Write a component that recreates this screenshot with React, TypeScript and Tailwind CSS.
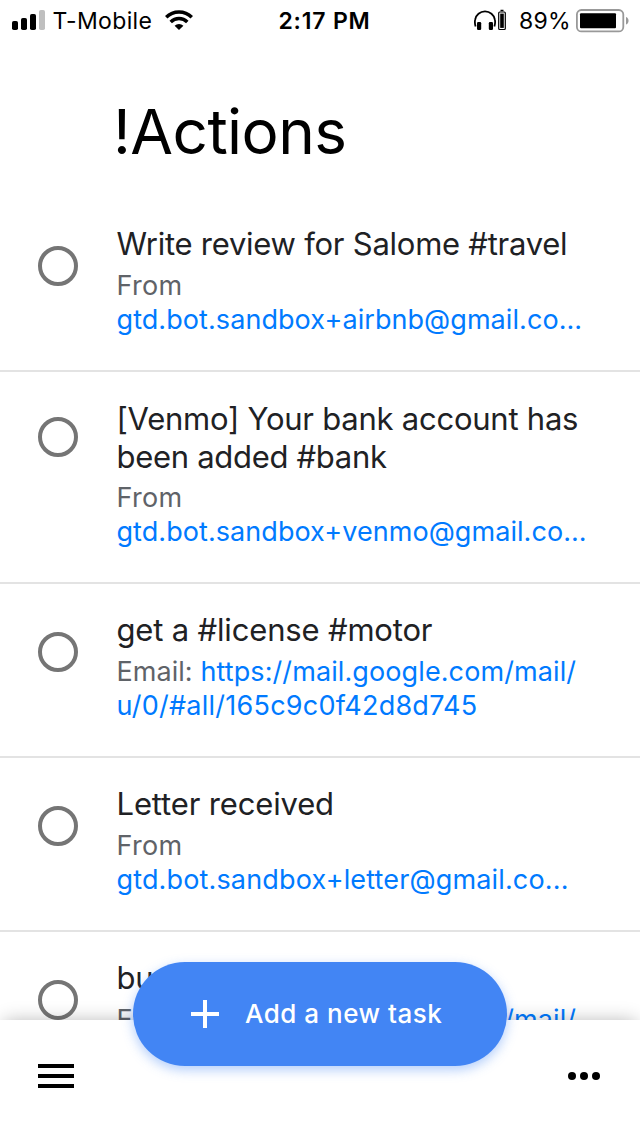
type Line = { text: string; tracking: string };
type Task = {
  title: Line[];
  prefix: Line;
  inlineLink?: Line;
  link: Line;
  circleTop: string;
};

const tasks: Task[] = [
  {
    title: [{ text: "Write review for Salome #travel", tracking: "tracking-[-0.25px]" }],
    prefix: { text: "From", tracking: "tracking-[0.3px]" },
    link: { text: "gtd.bot.sandbox+airbnb@gmail.co...", tracking: "tracking-[0.07px]" },
    circleTop: "pt-[48px]",
  },
  {
    title: [
      { text: "[Venmo] Your bank account has", tracking: "tracking-[-0.24px]" },
      { text: "been added #bank", tracking: "tracking-[-0.3px]" },
    ],
    prefix: { text: "From", tracking: "tracking-[0.3px]" },
    link: { text: "gtd.bot.sandbox+venmo@gmail.co...", tracking: "tracking-[0.06px]" },
    circleTop: "pt-[45px]",
  },
  {
    title: [{ text: "get a #license #motor", tracking: "tracking-[-0.17px]" }],
    prefix: { text: "Email:", tracking: "tracking-[0.05px]" },
    inlineLink: { text: "https://mail.google.com/mail/", tracking: "tracking-[0.1px]" },
    link: { text: "u/0/#all/165c9c0f42d8d745", tracking: "tracking-[0.24px]" },
    circleTop: "pt-[48px]",
  },
  {
    title: [{ text: "Letter received", tracking: "tracking-[-0.15px]" }],
    prefix: { text: "From", tracking: "tracking-[0.3px]" },
    link: { text: "gtd.bot.sandbox+letter@gmail.co...", tracking: "tracking-[0.15px]" },
    circleTop: "pt-[48px]",
  },
  {
    title: [{ text: "buy", tracking: "tracking-[-0.12px]" }],
    prefix: { text: "Email:", tracking: "tracking-[0.05px]" },
    inlineLink: { text: "https://mail.google.com/mail/", tracking: "tracking-[0.1px]" },
    link: { text: "", tracking: "" },
    circleTop: "pt-[48px]",
  },
];

function StatusBar() {
  return (
    <header className="grid h-10 shrink-0 grid-cols-[1fr_auto_1fr] items-center pr-[11px] pl-3 text-[23px] leading-[38px] text-black">
      <div className="flex items-center">
        <svg width="33" height="20" viewBox="0 0 33 20">
          <rect x="0" y="11" width="6" height="9" rx="1.8" />
          <rect x="9" y="8" width="6" height="12" rx="1.8" />
          <rect x="18" y="4" width="6" height="16" rx="1.8" />
          <rect x="27" y="0" width="6" height="20" rx="1.8" fill="#bfbfbf" />
        </svg>
        <span className="ml-[7.5px] pt-[2px] tracking-[0.35px]">T-Mobile</span>
        <svg className="ml-[13px]" width="28" height="20" viewBox="0 0 28 20" fill="none" stroke="#000">
          <path d="M1.2 7.3a18.2 18.2 0 0 1 25.6 0" strokeWidth="3.6" />
          <path d="M5.7 12a11.8 11.8 0 0 1 16.6 0" strokeWidth="3.5" />
          <path d="M9.6 15.8a6.2 6.2 0 0 1 8.8 0L14 20z" fill="#000" stroke="none" />
        </svg>
      </div>
      <div className="pt-[2px] pl-[8px] font-semibold tracking-[0.8px]">2:17 PM</div>
      <div className="flex items-center justify-end">
        <svg width="33" height="22" viewBox="0 0 33 22" fill="none" stroke="#000">
          <path
            d="M1.6 17.5C.6 14 .9 11.5 1.2 10.5A9.9 9.4 0 0 1 20.8 10.5C21.1 11.5 21.4 14 20.4 17.5"
            strokeWidth="1.8"
          />
          <rect x="3" y="13" width="4.2" height="8" rx="1.2" fill="#000" stroke="none" />
          <rect x="14.8" y="13" width="4.2" height="8" rx="1.2" fill="#000" stroke="none" />
          <rect x="24.7" y="3" width="6.6" height="17.5" rx="1" strokeWidth="1.2" />
          <rect x="26.2" y="4.6" width="3.6" height="14.3" fill="#000" stroke="none" />
          <path d="M26.5 1.5h3" strokeWidth="1.5" />
        </svg>
        <span className="ml-[12px] pt-[2px] tracking-[0.3px]">89%</span>
        <svg className="mt-[2px] ml-[5px]" width="53" height="24" viewBox="0 0 53 24">
          <rect x="0.9" y="1" width="46.4" height="21.4" rx="4.5" fill="none" stroke="#999" strokeWidth="1.8" />
          <rect x="4" y="4.3" width="36" height="15" rx="1" />
          <path d="M50 8c3.4 1 3.4 6.5 0 7.5z" fill="#999" />
        </svg>
      </div>
    </header>
  );
}

function TaskRow({ task }: { task: Task }) {
  const wrapped = task.title.length > 1;
  return (
    <li className="flex shrink-0 border-b-2 border-[#e3e3e3] pb-[33px] pl-[38px]">
      <div className={`w-[78.5px] shrink-0 ${task.circleTop}`}>
        <div className="size-10 rounded-full border-4 border-[#757575]" />
      </div>
      <div className={wrapped ? "pt-[28px] whitespace-nowrap" : "pt-[27px] whitespace-nowrap"}>
        {task.title.map((l) => (
          <div key={l.text} className={`text-[31px] leading-[38px] text-[#202124] ${l.tracking}`}>
            {l.text}
          </div>
        ))}
        <div className={`text-[27px] leading-[34px] text-[#5f6368] ${wrapped ? "mt-[5px]" : "mt-[6px]"}`}>
          <span className={task.prefix.tracking}>{task.prefix.text}</span>
          {task.inlineLink && (
            <span className={`text-[#007aff] ${task.inlineLink.tracking}`}> {task.inlineLink.text}</span>
          )}
        </div>
        <div className={`h-[34px] text-[27px] leading-[34px] text-[#007aff] ${task.link.tracking}`}>
          {task.link.text}
        </div>
      </div>
    </li>
  );
}

export default function App() {
  return (
    <div className="relative flex h-[1136px] w-[640px] flex-col overflow-hidden bg-white font-['Inter','Liberation_Sans',sans-serif]">
      <StatusBar />
      <main className="flex min-h-0 flex-1 flex-col overflow-hidden">
        <h1 className="h-[158px] shrink-0 pt-[52px] pl-[113px] text-[62px] leading-[80px] tracking-[-0.55px] text-black">
          !Actions
        </h1>
        <ul className="flex flex-col">
          {tasks.map((t) => (
            <TaskRow key={t.title[0].text} task={t} />
          ))}
        </ul>
      </main>
      <footer className="z-10 flex h-[116px] shrink-0 items-start justify-between bg-white px-[38px] shadow-[0_-2px_18px_-4px_rgba(0,0,0,0.32)]">
        <div className="mt-[44px] flex w-9 flex-col gap-[6px]">
          <div className="h-1 bg-black" />
          <div className="h-1 bg-black" />
          <div className="h-1 bg-black" />
        </div>
        <div className="mt-[52px] mr-[2px] flex gap-1">
          <div className="size-2 rounded-full bg-black" />
          <div className="size-2 rounded-full bg-black" />
          <div className="size-2 rounded-full bg-black" />
        </div>
      </footer>
      <button className="absolute top-[962px] left-[133px] z-20 flex h-[104px] w-[374px] items-center rounded-full bg-[#4285f4] pl-[58px] text-[26px] font-medium tracking-[0.5px] whitespace-nowrap text-white shadow-[0_4px_12px_rgba(66,133,244,0.4)]">
        <svg width="28" height="28" viewBox="0 0 28 28" stroke="#fff" strokeWidth="4">
          <path d="M14 0v28M0 14h28" />
        </svg>
        <span className="ml-[26px] pb-[2px]">Add a new task</span>
      </button>
    </div>
  );
}
